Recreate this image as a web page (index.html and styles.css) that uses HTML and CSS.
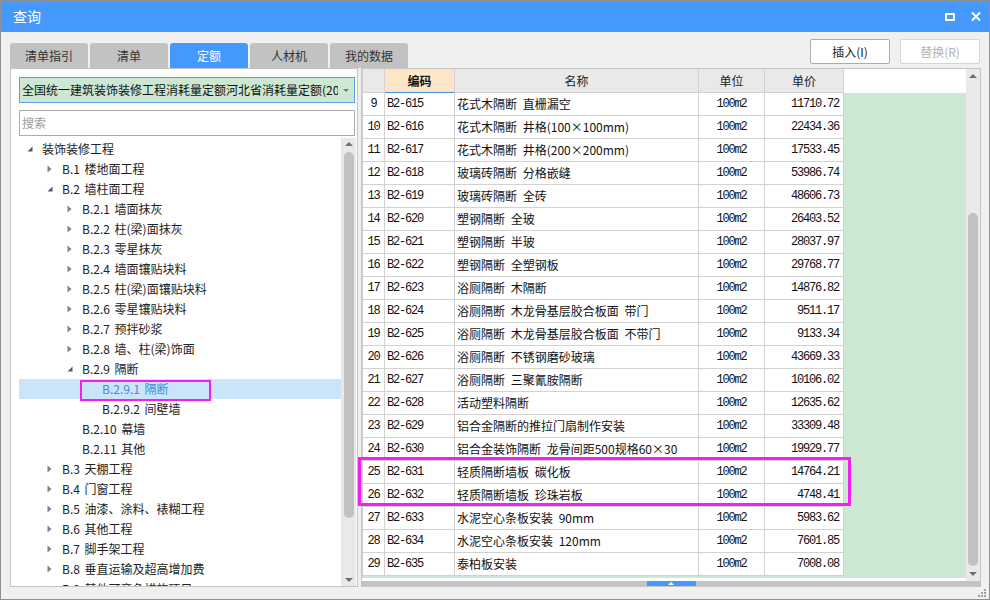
FILE: index.html
```
<!DOCTYPE html>
<html lang="zh-CN">
<head>
<meta charset="utf-8">
<title>查询</title>
<link rel="stylesheet" href="styles.css">
</head>
<body>
<div class="window">
  <div class="titlebar">
    <span class="title">查询</span>
    <div class="wctrl">
      <svg width="10" height="8" viewBox="0 0 10 8"><rect x="1" y="1" width="8" height="6" fill="none" stroke="#fff" stroke-width="2"/></svg>
      <svg width="10" height="9" viewBox="0 0 10 9"><path d="M1 0.5 L9 8.5 M9 0.5 L1 8.5" stroke="#fff" stroke-width="2"/></svg>
    </div>
  </div>

  <div class="tabrow">
    <div class="tabs">
      <div class="tab">清单指引</div>
      <div class="tab">清单</div>
      <div class="tab active">定额</div>
      <div class="tab">人材机</div>
      <div class="tab">我的数据</div>
    </div>
    <div class="actions">
      <button class="btn">插入(I)</button>
      <button class="btn disabled">替换(R)</button>
    </div>
  </div>

  <div class="main">
    <div class="lpanel">
      <div class="combo">
        <span class="combo-text">全国统一建筑装饰装修工程消耗量定额河北省消耗量定额(2012)</span>
        <span class="combo-arrow"><svg width="6" height="3" viewBox="0 0 6 3"><path d="M0 0 H6 L3 3Z" fill="#777"/></svg></span>
      </div>
      <div class="search">搜索</div>
      <div class="treebox">
        <div class="tree">
          <div class="trow l0"><span class="tog"><svg width="6" height="6" viewBox="0 0 6 6"><path d="M5.5 0.5 V5.5 H0.5Z" fill="#595959"/></svg></span>装饰装修工程</div>
          <div class="trow l1"><span class="tog"><svg width="5" height="8" viewBox="0 0 5 8"><path d="M0.5 0.5 L4.5 4 L0.5 7.5Z" fill="#808080"/></svg></span>B.1 楼地面工程</div>
          <div class="trow l1"><span class="tog"><svg width="6" height="6" viewBox="0 0 6 6"><path d="M5.5 0.5 V5.5 H0.5Z" fill="#595959"/></svg></span>B.2 墙柱面工程</div>
          <div class="trow l2"><span class="tog"><svg width="5" height="8" viewBox="0 0 5 8"><path d="M0.5 0.5 L4.5 4 L0.5 7.5Z" fill="#808080"/></svg></span>B.2.1 墙面抹灰</div>
          <div class="trow l2"><span class="tog"><svg width="5" height="8" viewBox="0 0 5 8"><path d="M0.5 0.5 L4.5 4 L0.5 7.5Z" fill="#808080"/></svg></span>B.2.2 柱(梁)面抹灰</div>
          <div class="trow l2"><span class="tog"><svg width="5" height="8" viewBox="0 0 5 8"><path d="M0.5 0.5 L4.5 4 L0.5 7.5Z" fill="#808080"/></svg></span>B.2.3 零星抹灰</div>
          <div class="trow l2"><span class="tog"><svg width="5" height="8" viewBox="0 0 5 8"><path d="M0.5 0.5 L4.5 4 L0.5 7.5Z" fill="#808080"/></svg></span>B.2.4 墙面镶贴块料</div>
          <div class="trow l2"><span class="tog"><svg width="5" height="8" viewBox="0 0 5 8"><path d="M0.5 0.5 L4.5 4 L0.5 7.5Z" fill="#808080"/></svg></span>B.2.5 柱(梁)面镶贴块料</div>
          <div class="trow l2"><span class="tog"><svg width="5" height="8" viewBox="0 0 5 8"><path d="M0.5 0.5 L4.5 4 L0.5 7.5Z" fill="#808080"/></svg></span>B.2.6 零星镶贴块料</div>
          <div class="trow l2"><span class="tog"><svg width="5" height="8" viewBox="0 0 5 8"><path d="M0.5 0.5 L4.5 4 L0.5 7.5Z" fill="#808080"/></svg></span>B.2.7 预拌砂浆</div>
          <div class="trow l2"><span class="tog"><svg width="5" height="8" viewBox="0 0 5 8"><path d="M0.5 0.5 L4.5 4 L0.5 7.5Z" fill="#808080"/></svg></span>B.2.8 墙、柱(梁)饰面</div>
          <div class="trow l2"><span class="tog"><svg width="6" height="6" viewBox="0 0 6 6"><path d="M5.5 0.5 V5.5 H0.5Z" fill="#595959"/></svg></span>B.2.9 隔断</div>
          <div class="trow l3 sel"><span class="tog"></span>B.2.9.1 隔断<span class="mark mark-tree"></span></div>
          <div class="trow l3"><span class="tog"></span>B.2.9.2 间壁墙</div>
          <div class="trow l2"><span class="tog"></span>B.2.10 幕墙</div>
          <div class="trow l2"><span class="tog"></span>B.2.11 其他</div>
          <div class="trow l1"><span class="tog"><svg width="5" height="8" viewBox="0 0 5 8"><path d="M0.5 0.5 L4.5 4 L0.5 7.5Z" fill="#808080"/></svg></span>B.3 天棚工程</div>
          <div class="trow l1"><span class="tog"><svg width="5" height="8" viewBox="0 0 5 8"><path d="M0.5 0.5 L4.5 4 L0.5 7.5Z" fill="#808080"/></svg></span>B.4 门窗工程</div>
          <div class="trow l1"><span class="tog"><svg width="5" height="8" viewBox="0 0 5 8"><path d="M0.5 0.5 L4.5 4 L0.5 7.5Z" fill="#808080"/></svg></span>B.5 油漆、涂料、裱糊工程</div>
          <div class="trow l1"><span class="tog"><svg width="5" height="8" viewBox="0 0 5 8"><path d="M0.5 0.5 L4.5 4 L0.5 7.5Z" fill="#808080"/></svg></span>B.6 其他工程</div>
          <div class="trow l1"><span class="tog"><svg width="5" height="8" viewBox="0 0 5 8"><path d="M0.5 0.5 L4.5 4 L0.5 7.5Z" fill="#808080"/></svg></span>B.7 脚手架工程</div>
          <div class="trow l1"><span class="tog"><svg width="5" height="8" viewBox="0 0 5 8"><path d="M0.5 0.5 L4.5 4 L0.5 7.5Z" fill="#808080"/></svg></span>B.8 垂直运输及超高增加费</div>
          <div class="trow l1"><span class="tog"><svg width="5" height="8" viewBox="0 0 5 8"><path d="M0.5 0.5 L4.5 4 L0.5 7.5Z" fill="#808080"/></svg></span>B.9 其他可竞争措施项目</div>
        </div>
        <div class="vs vs-left">
          <div class="arr"><svg width="8" height="4" viewBox="0 0 8 4"><path d="M0 4 L4 0 L8 4Z" fill="#707070"/></svg></div>
          <div class="thumb thumb-left"></div>
          <div class="fill"></div>
          <div class="arr"><svg width="8" height="4" viewBox="0 0 8 4"><path d="M0 0 H8 L4 4Z" fill="#707070"/></svg></div>
        </div>
      </div>
    </div>

    <div class="rpanel">
      <div class="rbody">
        <div class="grid">
          <div class="gr gh"><div></div><div class="code-h">编码</div><div>名称</div><div>单位</div><div>单价</div></div>
          <div class="gr"><div>9</div><div class="c">B2-615</div><div class="n">花式木隔断 直栅漏空</div><div class="u">100m2</div><div class="p">11710.72</div></div>
          <div class="gr"><div>10</div><div class="c">B2-616</div><div class="n">花式木隔断 井格(100×100mm)</div><div class="u">100m2</div><div class="p">22434.36</div></div>
          <div class="gr"><div>11</div><div class="c">B2-617</div><div class="n">花式木隔断 井格(200×200mm)</div><div class="u">100m2</div><div class="p">17533.45</div></div>
          <div class="gr"><div>12</div><div class="c">B2-618</div><div class="n">玻璃砖隔断 分格嵌缝</div><div class="u">100m2</div><div class="p">53986.74</div></div>
          <div class="gr"><div>13</div><div class="c">B2-619</div><div class="n">玻璃砖隔断 全砖</div><div class="u">100m2</div><div class="p">48606.73</div></div>
          <div class="gr"><div>14</div><div class="c">B2-620</div><div class="n">塑钢隔断 全玻</div><div class="u">100m2</div><div class="p">26403.52</div></div>
          <div class="gr"><div>15</div><div class="c">B2-621</div><div class="n">塑钢隔断 半玻</div><div class="u">100m2</div><div class="p">28037.97</div></div>
          <div class="gr"><div>16</div><div class="c">B2-622</div><div class="n">塑钢隔断 全塑钢板</div><div class="u">100m2</div><div class="p">29768.77</div></div>
          <div class="gr"><div>17</div><div class="c">B2-623</div><div class="n">浴厕隔断 木隔断</div><div class="u">100m2</div><div class="p">14876.82</div></div>
          <div class="gr"><div>18</div><div class="c">B2-624</div><div class="n">浴厕隔断 木龙骨基层胶合板面 带门</div><div class="u">100m2</div><div class="p">9511.17</div></div>
          <div class="gr"><div>19</div><div class="c">B2-625</div><div class="n">浴厕隔断 木龙骨基层胶合板面 不带门</div><div class="u">100m2</div><div class="p">9133.34</div></div>
          <div class="gr"><div>20</div><div class="c">B2-626</div><div class="n">浴厕隔断 不锈钢磨砂玻璃</div><div class="u">100m2</div><div class="p">43669.33</div></div>
          <div class="gr"><div>21</div><div class="c">B2-627</div><div class="n">浴厕隔断 三聚氰胺隔断</div><div class="u">100m2</div><div class="p">10106.02</div></div>
          <div class="gr"><div>22</div><div class="c">B2-628</div><div class="n">活动塑料隔断</div><div class="u">100m2</div><div class="p">12635.62</div></div>
          <div class="gr"><div>23</div><div class="c">B2-629</div><div class="n">铝合金隔断的推拉门扇制作安装</div><div class="u">100m2</div><div class="p">33309.48</div></div>
          <div class="gr"><div>24</div><div class="c">B2-630</div><div class="n">铝合金装饰隔断 龙骨间距500规格60×30</div><div class="u">100m2</div><div class="p">19929.77</div></div>
          <div class="gr"><div>25</div><div class="c">B2-631</div><div class="n">轻质隔断墙板 碳化板</div><div class="u">100m2</div><div class="p">14764.21</div></div>
          <div class="gr"><div>26</div><div class="c">B2-632</div><div class="n">轻质隔断墙板 珍珠岩板</div><div class="u">100m2</div><div class="p">4748.41</div></div>
          <div class="gr"><div>27</div><div class="c">B2-633</div><div class="n">水泥空心条板安装 90mm</div><div class="u">100m2</div><div class="p">5983.62</div></div>
          <div class="gr"><div>28</div><div class="c">B2-634</div><div class="n">水泥空心条板安装 120mm</div><div class="u">100m2</div><div class="p">7601.85</div></div>
          <div class="gr"><div>29</div><div class="c">B2-635</div><div class="n">泰柏板安装</div><div class="u">100m2</div><div class="p">7008.08</div></div>
        </div>
        <div class="vs vs-right">
          <div class="arr"><svg width="8" height="4" viewBox="0 0 8 4"><path d="M0 4 L4 0 L8 4Z" fill="#707070"/></svg></div>
          <div class="thumb thumb-right"></div>
          <div class="fill"></div>
          <div class="arr"><svg width="8" height="4" viewBox="0 0 8 4"><path d="M0 0 H8 L4 4Z" fill="#707070"/></svg></div>
        </div>
      </div>
      <div class="hscroll"><div class="hhandle"><svg width="6" height="3" viewBox="0 0 6 3"><path d="M0 3 L3 0 L6 3Z" fill="#fff"/></svg></div></div>
      <div class="mark mark-table"></div>
    </div>
  </div>

  <div class="footer">
    <svg width="10" height="8" viewBox="0 0 10 8" fill="#a0a0a0"><rect x="8" y="0" width="2" height="2"/><rect x="5" y="3" width="2" height="2"/><rect x="8" y="3" width="2" height="2"/><rect x="2" y="6" width="2" height="2"/><rect x="5" y="6" width="2" height="2"/><rect x="8" y="6" width="2" height="2"/></svg>
  </div>
</div>
</body>
</html>
```
FILE: styles.css
```
* { box-sizing: border-box; }
body {
  margin: 0;
  font-family: "Noto Sans CJK SC", "Liberation Sans", sans-serif;
  font-size: 12px;
  color: #222;
}
.window {
  width: 990px;
  height: 600px;
  border: 1px solid #909090;
  background: #f0f0f0;
  display: flex;
  flex-direction: column;
}
.titlebar {
  height: 31px;
  flex: none;
  background: #4598fc;
  display: flex;
  align-items: center;
  padding: 0 8px 0 12px;
  color: #fff;
}
.title { flex: 1; font-size: 14px; line-height: 31px; }
.wctrl { display: flex; align-items: center; gap: 16px; }
.wctrl svg { display: block; }

.tabrow {
  height: 29px;
  margin-top: 7px;
  flex: none;
  display: flex;
  align-items: flex-end;
  padding: 0 9px;
}
.tabs { display: flex; gap: 2px; }
.tab {
  width: 78px;
  height: 25px;
  line-height: 25px;
  text-align: center;
  background: #c2c2c2;
  border-radius: 3px 3px 0 0;
  color: #333;
}
.tab.active { background: #4598fc; color: #fff; }
.actions { margin-left: auto; align-self: flex-start; display: flex; gap: 10px; }
.btn {
  width: 80px;
  height: 25px;
  border: 1px solid #adadad;
  background: #fff;
  border-radius: 2px;
  font: 12px "Noto Sans CJK SC", sans-serif;
  color: #222;
  padding: 0;
}
.btn.disabled { border-color: #d6d6d6; color: #b3b3b3; }

.main {
  height: 519px;
  flex: none;
  display: flex;
  gap: 3px;
  padding: 0 8px 0 9px;
}
.lpanel {
  width: 348px;
  border: 1px solid #c4c4c4;
  background: #fff;
  padding: 8px 1px 0 8px;
  display: flex;
  flex-direction: column;
}
.combo {
  height: 26px;
  flex: none;
  margin-right: 1px;
  border: 1px solid #5a9ee6;
  background: #cde8d2;
  display: flex;
  align-items: center;
  padding-left: 2px;
}
.combo-text { flex: 1; overflow: hidden; white-space: nowrap; color: #111; line-height: 24px; }
.combo-arrow { width: 16px; flex: none; display: flex; justify-content: center; }
.combo-arrow svg { display: block; }
.search {
  height: 26px;
  flex: none;
  margin: 7px 1px 0 0;
  border: 1px solid #acacac;
  padding-left: 2px;
  line-height: 24px;
  color: #9c9c9c;
}
.treebox { flex: 1; min-height: 0; margin-top: 2px; display: flex; overflow: hidden; }
.tree { flex: 1; padding-top: 1px; overflow: hidden; }
.trow {
  height: 20px;
  line-height: 20px;
  display: flex;
  align-items: center;
  white-space: pre;
  word-spacing: 2px;
  position: relative;
  color: #222;
}
.trow.l0 { padding-left: 8px; }
.trow.l1 { padding-left: 28px; }
.trow.l2 { padding-left: 48px; }
.trow.l3 { padding-left: 68px; }
.trow.sel { background: #cce4f7; color: #3b8de0; }
.tog { width: 15px; flex: none; display: flex; align-items: center; }
.tog svg { display: block; }

.vs {
  flex: none;
  background: #e9e9e9;
  display: flex;
  flex-direction: column;
  align-items: center;
}
.vs-left { width: 15px; }
.vs-right { width: 14px; }
.vs .arr { height: 12px; flex: none; display: flex; align-items: center; justify-content: center; }
.vs-right .arr { height: 14px; }
.vs .arr svg { display: block; }
.vs .fill { flex: 1; }
.thumb { width: 10px; border-radius: 5px; background: #c1c1c1; flex: none; }
.thumb-left { margin-top: 2px; height: 366px; }
.thumb-right { margin-top: 130px; height: 353px; }

.rpanel {
  width: 620px;
  border: 1px solid #c4c4c4;
  background: #fff;
  display: flex;
  flex-direction: column;
  position: relative;
}
.rbody { height: 512px; flex: none; display: flex; }
.grid {
  flex: 1;
  overflow: hidden;
  background: linear-gradient(#fff 0 24px, #cde8d2 24px 509px, #fff 509px);
}
.gr {
  display: grid;
  grid-template-columns: 23px 70px 244px 66px 79px;
  height: 23px;
}
.gr > div {
  border-right: 1px solid #d2d2d2;
  border-bottom: 1px solid #d2d2d2;
  background: #fff;
  overflow: hidden;
  white-space: nowrap;
  line-height: 22px;
}
.gr > div:first-child {
  border-left: 1px solid #d2d2d2;
  text-align: center;
  font-family: "Liberation Mono", monospace;
  font-size: 12px;
  letter-spacing: -1.2px;
  color: #111;
}
.gr.gh { height: 24px; }
.gr.gh > div {
  background: #e9e9e9;
  text-align: center;
  line-height: 23px;
  color: #222;
  font-family: "Noto Sans CJK SC", sans-serif;
  font-size: 12px;
  letter-spacing: 0;
}
.gr.gh > div.code-h {
  background: #fde6c8;
  font-weight: bold;
  border-bottom: 1px solid #3f8fe2;
  color: #111;
}
.gr .c, .gr .u, .gr .p {
  font-family: "Liberation Mono", monospace;
  font-size: 12px;
  letter-spacing: -1.2px;
  color: #111;
}
.gr .c { padding-left: 2px; }
.gr .u { text-align: center; }
.gr .p { text-align: right; padding-right: 4px; }
.gr .n { padding-left: 2px; color: #111; word-spacing: 3px; }

.hscroll {
  height: 5px;
  flex: none;
  background: #c3c3c3;
  display: flex;
  justify-content: center;
}
.hhandle {
  width: 49px;
  background: #4598fc;
  display: flex;
  align-items: center;
  justify-content: center;
}
.hhandle svg { display: block; }

.mark {
  position: absolute;
  border: 3px solid #f020f0;
  pointer-events: none;
}
.mark-table { left: -4px; top: 388px; width: 493px; height: 49px; }
.mark-tree { left: 61px; top: 1px; width: 131px; height: 21px; border-width: 2px; }

.footer {
  flex: 1;
  display: flex;
  justify-content: flex-end;
  align-items: flex-end;
  padding: 0 3px 2px 0;
}
.footer svg { display: block; }
```
